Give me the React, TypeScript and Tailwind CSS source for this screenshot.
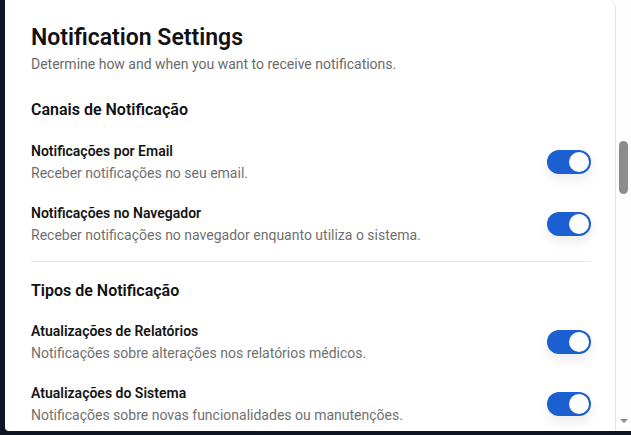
const sections = [
  {
    title: "Canais de Notificação",
    items: [
      { label: "Notificações por Email", hint: "Receber notificações no seu email." },
      {
        label: "Notificações no Navegador",
        hint: "Receber notificações no navegador enquanto utiliza o sistema.",
      },
    ],
  },
  {
    title: "Tipos de Notificação",
    items: [
      {
        label: "Atualizações de Relatórios",
        hint: "Notificações sobre alterações nos relatórios médicos.",
      },
      {
        label: "Atualizações do Sistema",
        hint: "Notificações sobre novas funcionalidades ou manutenções.",
      },
    ],
  },
];

function Toggle() {
  return (
    <button
      type="button"
      className="flex h-6 w-11 shrink-0 items-center rounded-full bg-[#1b5fd1] p-0.5 shadow-[0_6px_12px_rgba(0,0,0,0.08)]"
    >
      <span className="h-5 w-5 translate-x-5 rounded-full bg-white" />
    </button>
  );
}

export default function App() {
  return (
    <div className="flex h-[435px] bg-[#0f1523] pb-[4px] pl-[5px] font-['Roboto',sans-serif]">
      <div className="flex flex-1 overflow-hidden rounded-bl-[4px] bg-white">
        <div className="flex-1 rounded-tr-[8px] border-r border-[#e3e3e3] pl-[26px] pr-6 pt-[22px]">
          <h1 className="text-[23px] leading-8 font-semibold text-[#111]">Notification Settings</h1>
          <p className="text-sm leading-5 text-[#6b6b6b]">
            Determine how and when you want to receive notifications.
          </p>

          {sections.map((section, i) => (
            <div key={section.title}>
              {i > 0 && <div className="mt-4 h-px bg-[#e6e6e6]" />}
              <h2
                className={
                  i === 0
                    ? "mt-6 text-base leading-6 font-semibold text-[#111]"
                    : "mt-[17px] text-base leading-6 font-semibold text-[#111]"
                }
              >
                {section.title}
              </h2>
              <div className={i === 0 ? "mt-[19px] flex flex-col gap-5" : "mt-[18px] flex flex-col gap-5"}>
                {section.items.map((item) => (
                  <div key={item.label} className="flex items-center justify-between">
                    <div className="flex flex-col gap-0.5">
                      <span className="text-sm leading-5 font-semibold text-[#151515]">
                        {item.label}
                      </span>
                      <span className="text-sm leading-5 text-[#707070]">{item.hint}</span>
                    </div>
                    <Toggle />
                  </div>
                ))}
              </div>
            </div>
          ))}
        </div>

        <div className="flex w-[15px] flex-col items-center bg-[#fdfdfd] pt-[141px]">
          <div className="h-[53px] w-[9px] rounded-full bg-[#8c8c8c]" />
          <div className="flex-1" />
          <div className="mb-[8px] h-0 w-0 border-x-[4px] border-t-[4px] border-x-transparent border-t-[#8c8c8c]" />
        </div>
      </div>
    </div>
  );
}
